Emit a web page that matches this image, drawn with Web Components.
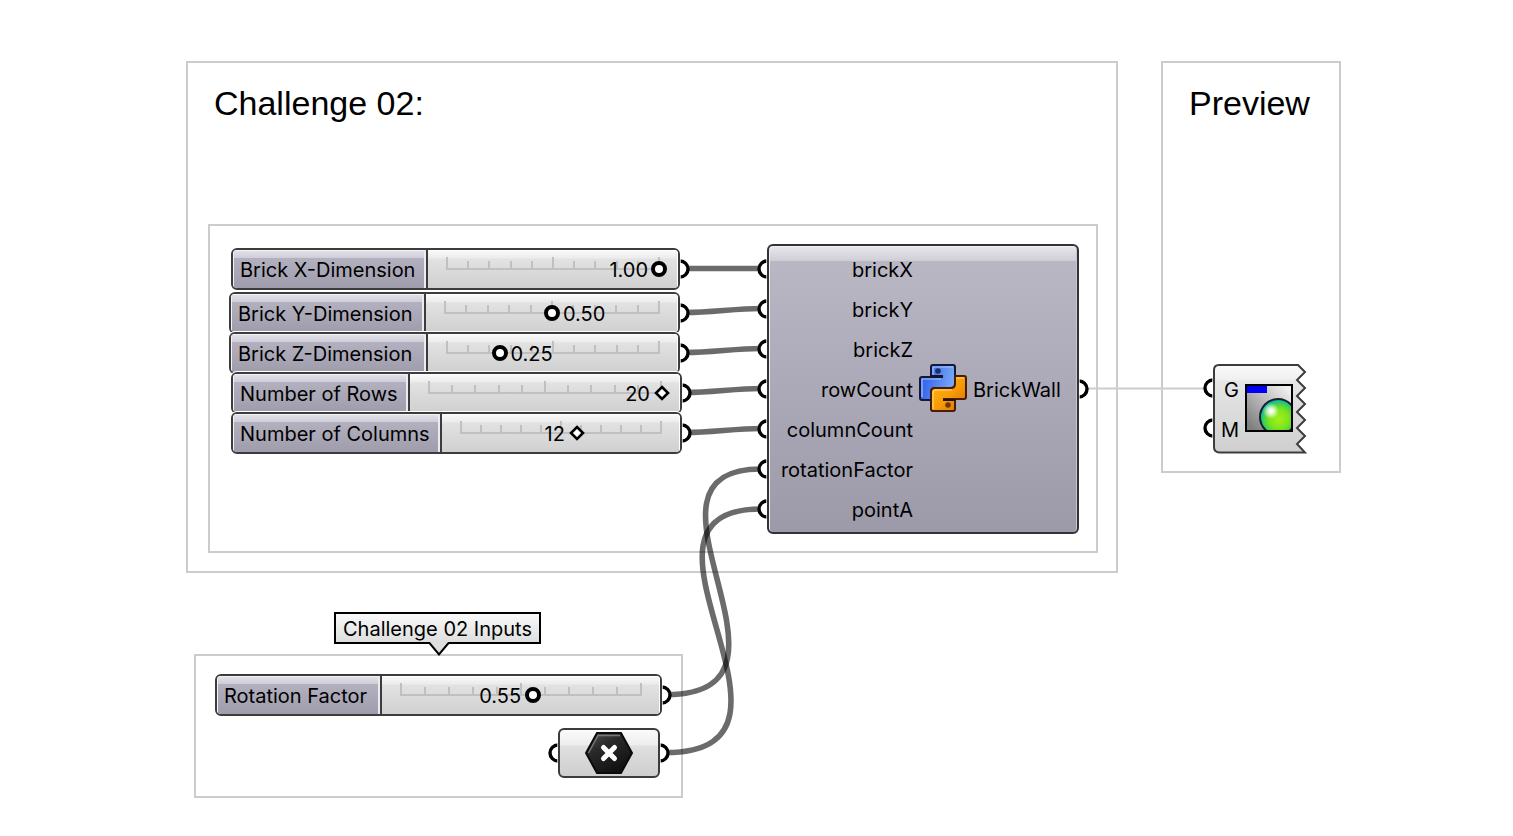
<!DOCTYPE html>
<html lang="en">
<head>
<meta charset="utf-8">
<title>Challenge 02 – Brick wall definition</title>
<style>
  body { margin: 0; background: #fff; color: #000; font-family: Inter, "Liberation Sans", sans-serif; font-size: 20px; line-height: 24px; }
</style>
</head>
<body>
<gh-canvas>
  <gh-group x="186" y="61" w="932" h="512" label="Challenge 02:"></gh-group>
  <gh-group x="208" y="224" w="890" h="329"></gh-group>
  <gh-group x="1161" y="61" w="180" h="412" label="Preview"></gh-group>
  <gh-group x="194" y="654" w="489" h="144"></gh-group>

  <gh-wires></gh-wires>

  <gh-slider x="231" y="248" w="449" name-width="195" label="Brick X-Dimension" min="0" max="1" step="0.01" value="1.00" side="left"></gh-slider>
  <gh-slider x="229" y="292" w="451" name-width="195" label="Brick Y-Dimension" min="0" max="1" step="0.01" value="0.50" side="right"></gh-slider>
  <gh-slider x="229" y="332" w="451" name-width="197" label="Brick Z-Dimension" min="0" max="1" step="0.01" value="0.25" side="right"></gh-slider>
  <gh-slider x="231" y="372" w="451" name-width="177" label="Number of Rows" min="1" max="20" step="1" value="20" side="left" knob="diamond"></gh-slider>
  <gh-slider x="231" y="412" w="451" name-width="209" label="Number of Columns" min="1" max="20" step="1" value="12" side="left" knob="diamond"></gh-slider>
  <gh-slider x="215" y="674" w="447" name-width="165" label="Rotation Factor" min="0" max="1" step="0.01" value="0.55" side="left"></gh-slider>

  <gh-script x="767" y="244" w="312" inputs="brickX brickY brickZ rowCount columnCount rotationFactor pointA" output="BrickWall"></gh-script>
  <gh-preview x="1213" y="364" w="94"></gh-preview>
  <gh-point x="558" y="728" w="102"></gh-point>
  <gh-tag x="334" y="612" w="207">Challenge 02 Inputs</gh-tag>
</gh-canvas>

<script>
const placed = `
  :host { display: block; position: absolute; box-sizing: border-box; }
  * { box-sizing: border-box; }
`;

class GhElement extends HTMLElement {
  connectedCallback() {
    if (this.shadowRoot) return;
    this.attachShadow({ mode: "open" }).innerHTML = `<style>${placed}</style>` + this.render();
    for (const [attr, prop] of [["x", "left"], ["y", "top"], ["w", "width"], ["h", "height"]]) {
      if (this.hasAttribute(attr)) this.style[prop] = this.getAttribute(attr) + "px";
    }
    this.ready();
  }
  ready() {}
}

customElements.define("gh-canvas", class extends HTMLElement {
  constructor() {
    super();
    this.attachShadow({ mode: "open" }).innerHTML = `
      <style>:host { display: block; position: relative; width: 100%; min-height: 100vh; overflow: hidden; background: #fff; }</style>
      <slot></slot>`;
  }
});

customElements.define("gh-group", class extends GhElement {
  render() {
    const label = this.getAttribute("label");
    return `
      <style>
        :host { border: 2px solid #ccc; }
        h2 { margin: 0; padding: 20px 26px; font: 400 34px/40px "Liberation Sans", Arial, sans-serif; white-space: nowrap; }
      </style>
      ${label ? `<h2>${label}</h2>` : ""}`;
  }
});

/* Half-round grip on the edge of a component */
customElements.define("gh-port", class extends HTMLElement {
  connectedCallback() {
    if (this.shadowRoot) return;
    const left = this.getAttribute("side") === "left";
    this.attachShadow({ mode: "open" }).innerHTML = `
      <style>
        :host { display: block; position: absolute; width: 10px; height: 20px; ${left ? "left: -10px" : "right: -10px"}; }
        svg { display: block; }
      </style>
      <svg width="10" height="20" viewBox="0 0 10 20" aria-hidden="true">
        <path d="${left ? "M10 2A8 8 0 0 0 10 18" : "M0 2A8 8 0 0 1 0 18"}" fill="#fff" stroke="#000" stroke-width="3.4"/>
        <path d="${left ? "M9.5 0V20" : "M.5 0V20"}" stroke="#fff" stroke-opacity=".7"/>
      </svg>`;
  }
});

customElements.define("gh-wires", class extends GhElement {
  render() {
    const wire = (x1, y1, x2, y2, d1, d2) => `<path d="M${x1} ${y1}C${x1 + d1} ${y1} ${x2 - d2} ${y2} ${x2} ${y2}"/>`;
    return `
      <style>
        :host { inset: 0; }
        svg { display: block; width: 100%; height: 100%; }
        path { fill: none; stroke: #000; stroke-opacity: .58; stroke-width: 5.6; }
        .thin { stroke: #ccc; stroke-opacity: 1; stroke-width: 2; }
      </style>
      <svg aria-hidden="true">
        ${wire(686, 268.5, 761, 268.5, 25, 25)}
        ${wire(686, 312.5, 761, 308.5, 25, 25)}
        ${wire(686, 352.5, 761, 348.5, 25, 25)}
        ${wire(686, 392.5, 761, 388.5, 25, 25)}
        ${wire(686, 432.5, 761, 428.5, 25, 25)}
        ${wire(667, 694.5, 761, 469, 157, 147)}
        ${wire(666, 752.5, 761, 509, 169, 159)}
        <path class="thin" d="M1084 388.5H1208"/>
      </svg>`;
  }
});

customElements.define("gh-slider", class extends GhElement {
  render() {
    const a = n => this.getAttribute(n);
    const diamond = a("knob") === "diamond";
    const ticks = Array.from({ length: 11 }, (_, i) => `<i${i % 5 ? "" : ' class="tall"'}></i>`).join("");
    return `
      <style>
        :host { height: 42px; }
        .box { display: flex; height: 100%; border: 2px solid #3c3c3c; border-radius: 6px; box-shadow: 0 0 0 1px #fff; overflow: hidden; background: #dcdcdc; }
        label { flex: none; width: ${a("name-width")}px; padding: 8px 0 0 7px; white-space: nowrap; border: solid #3c3c3c; border-width: 0 2px 0 0;
          background: linear-gradient(#e4e3ea, #cfced8 8px, #b3b1bf 8px, #9f9dac);
          box-shadow: inset -2px 0 #ecebf0, inset 1px 1px #f4f4f7; }
        .rail { flex: 1; display: grid; padding: 0 18px; background: linear-gradient(#fafafa, #ececec 8px, #e2e2e2 9px, #d0d0d0); box-shadow: inset -1px 1px #fff; }
        .rail > * { grid-area: 1 / 1; }
        .ticks { display: flex; justify-content: space-between; align-items: flex-end; height: 13px; margin-top: 7px; border-bottom: 2px solid #c0c0c0; }
        i { width: 2px; height: 7px; background: #c0c0c0; }
        .tall { height: 11px; }
        input { -webkit-appearance: none; appearance: none; width: calc(100% + 14px); height: 16px; margin: 11px -7px 0; background: none; outline: none; z-index: 1; }
        input::-webkit-slider-thumb { -webkit-appearance: none; width: 16px; height: 16px; border: 4px solid #000; border-radius: 50%; background: #fff; }
        input.hidden { opacity: 0; }
        .knob { width: 16px; height: 16px; margin: 11px 0 0 calc(var(--at) - 8px); z-index: 2; pointer-events: none; }
        output { margin-top: 8px; white-space: nowrap; }
        .left { justify-self: end; margin-right: calc(100% - var(--at) + 12px); }
        .right { justify-self: start; margin-left: calc(var(--at) + 11px); }
      </style>
      <div class="box">
        <label for="v">${a("label")}</label>
        <div class="rail">
          <div class="ticks">${ticks}</div>
          <input id="v" class="${diamond ? "hidden" : ""}" type="range" min="${a("min")}" max="${a("max")}" step="${a("step")}" value="${a("value")}">
          ${diamond ? `<svg class="knob" viewBox="0 0 16 16" aria-hidden="true"><path d="M8 2L14 8L8 14L2 8Z" fill="#fff" stroke="#000" stroke-width="2.6"/></svg>` : ""}
          <output for="v" class="${a("side")}">${a("value")}</output>
        </div>
      </div>
      <gh-port side="right" style="top: 11px"></gh-port>`;
  }
  ready() {
    const input = this.shadowRoot.querySelector("input");
    const output = this.shadowRoot.querySelector("output");
    const decimals = this.getAttribute("step") === "1" ? 0 : 2;
    const update = () => {
      this.style.setProperty("--at", (input.value - input.min) / (input.max - input.min) * 100 + "%");
      output.textContent = Number(input.value).toFixed(decimals);
    };
    input.addEventListener("input", update);
    update();
  }
});

customElements.define("gh-script", class extends GhElement {
  render() {
    const rows = this.getAttribute("inputs").split(" ").map(n => `<li><gh-port side="left"></gh-port>${n}</li>`).join("");
    const snake = "M12 12V3Q12 1 14 1H34Q36 1 36 3V20Q36 24 32 24H16Q12 24 12 28V36H3Q1 36 1 34V15Q1 13 3 13H24";
    return `
      <style>
        .box { display: flex; align-items: center; height: 290px; border: 2px solid #333; border-radius: 6px;
          background: linear-gradient(#e8e7ec, #cfced6 15px, #b9b7c4 15px, #9c9aa9); box-shadow: inset 1px 1px #f0f0f4, inset -1px 0 #c8c7d0; }
        ul { list-style: none; margin: 0; padding: 2px 0 0; width: 144px; text-align: right; }
        li { position: relative; height: 40px; padding-top: 8px; margin-left: -2px; }
        gh-port { top: 9px; }
        svg.py { flex: none; margin: 0 6px 2px; }
        span { padding-top: 2px; }
      </style>
      <div class="box">
        <ul>${rows}</ul>
        <svg class="py" width="48" height="48" viewBox="0 0 48 48" role="img" aria-label="Python">
          <defs>
            <linearGradient id="b" x1="0" y1=".3" x2="1" y2=".5"><stop offset="0" stop-color="#2c5be8"/><stop offset="1" stop-color="#7cacf8"/></linearGradient>
            <linearGradient id="o" x1="0" y1="0" x2="1" y2="1"><stop offset="0" stop-color="#d86c00"/><stop offset=".45" stop-color="#f79a08"/><stop offset="1" stop-color="#ffc01c"/></linearGradient>
          </defs>
          <path d="${snake}" fill="url(#b)" stroke="#10183c" stroke-width="2" stroke-linejoin="round"/>
          <path d="M14 11V3H34M3 33V15H22" fill="none" stroke="#a9c4ff" stroke-width="1.2"/>
          <g transform="rotate(180 24 24)"><path d="${snake}" fill="url(#o)" stroke="#4a1c06" stroke-width="2" stroke-linejoin="round"/></g>
          <path d="M14 45V29Q14 26 17 26H33M37 14H45" fill="none" stroke="#ffd66a" stroke-width="1.2"/>
          <path d="M12 12H24M24 36H36" stroke="#1c1420" stroke-width="2"/>
          <circle cx="19" cy="7" r="2.8" fill="#16306c"/><circle cx="29" cy="41" r="2.8" fill="#6c3a04"/>
        </svg>
        <span>${this.getAttribute("output")}</span>
      </div>
      <gh-port side="right" style="top: 135px"></gh-port>`;
  }
});

customElements.define("gh-preview", class extends GhElement {
  render() {
    return `
      <style>
        :host { height: 90px; }
        .shape { position: absolute; inset: 0; }
        .row { position: relative; display: flex; align-items: center; height: 100%; padding-bottom: 2px; gap: 6px; }
        ul { list-style: none; margin: 0; padding: 4px 0 0; width: 26px; text-align: right; }
        li { position: relative; height: 40px; padding-top: 8px; }
        gh-port { top: 8px; }
      </style>
      <svg class="shape" width="94" height="90" viewBox="0 0 94 90" aria-hidden="true">
        <defs><linearGradient id="g" x2="0" y2="1"><stop offset="0" stop-color="#fafafa"/><stop offset=".17" stop-color="#f0f0f0"/><stop offset=".18" stop-color="#e6e6e6"/><stop offset="1" stop-color="#cfcfcf"/></linearGradient></defs>
        <path d="M6 1H85L92 8L84 16L92 24L84 32L92 40L84 48L92 56L84 64L92 72L84 80L92 88.500H6Q1 88 1 83V6Q1 1 6 1Z" fill="url(#g)" stroke="#3c3c3c" stroke-width="2"/>
      </svg>
      <div class="row">
        <ul><li><gh-port side="left"></gh-port>G</li><li><gh-port side="left"></gh-port>M</li></ul>
        <svg width="48" height="48" viewBox="0 0 48 48" role="img" aria-label="Custom preview">
          <defs>
            <linearGradient id="w" x1=".1" y1=".9" x2=".9" y2=".1"><stop offset="0" stop-color="#808080"/><stop offset="1" stop-color="#eee"/></linearGradient>
            <radialGradient id="s" cx="34" cy="35" fx="34" fy="35" r="20" gradientUnits="userSpaceOnUse"><stop offset="0" stop-color="#a4f01c"/><stop offset=".5" stop-color="#7ce41c"/><stop offset=".78" stop-color="#3cd050"/><stop offset=".92" stop-color="#10b8a8"/><stop offset="1" stop-color="#1880b8"/></radialGradient>
            <radialGradient id="k"><stop offset="0" stop-color="#fff"/><stop offset=".3" stop-color="#fff" stop-opacity=".85"/><stop offset="1" stop-color="#fff" stop-opacity="0"/></radialGradient>
            <clipPath id="c"><path d="M1 1H47V47H1Z"/></clipPath>
          </defs>
          <path d="M1 1H47V47H1Z" fill="url(#w)"/>
          <circle cx="33" cy="33" r="18" fill="url(#s)" stroke="#18202c" stroke-width="2" clip-path="url(#c)"/>
          <circle cx="26" cy="27" r="8" fill="url(#k)"/>
          <path d="M2 2H22V9H2Z" fill="#0000f4"/>
          <path d="M1 1H47V47H1Z" fill="none" stroke="#000" stroke-width="2"/>
        </svg>
      </div>`;
  }
});

customElements.define("gh-point", class extends GhElement {
  render() {
    return `
      <style>
        .box { display: flex; justify-content: center; align-items: center; height: 50px; border: 2px solid #3c3c3c; border-radius: 6px;
          background: linear-gradient(#fbfbfb, #ededed 15px, #e0e0e0 16px, #cecece); }
        gh-port { top: 15px; }
      </style>
      <gh-port side="left"></gh-port>
      <div class="box">
        <svg width="48" height="42" viewBox="0 0 48 42" role="img" aria-label="Point">
          <defs><linearGradient id="h" x2=".6" y2="1"><stop offset="0" stop-color="#555"/><stop offset=".4" stop-color="#2a2a2a"/><stop offset="1" stop-color="#111"/></linearGradient></defs>
          <path d="M12 1H36L47 21L36 41H12L1 21Z" fill="url(#h)" stroke="#0a0a0a" stroke-width="2"/>
          <path d="M3.500 21L13 3.500H35" fill="none" stroke="#777" stroke-width="1.4"/>
          <path d="M18.500 15.500L29.500 26.500M29.500 15.500L18.500 26.500" stroke="#fff" stroke-width="5" stroke-linecap="round"/>
        </svg>
      </div>
      <gh-port side="right"></gh-port>`;
  }
});

customElements.define("gh-tag", class extends GhElement {
  render() {
    return `
      <style>
        .box { height: 32px; padding: 3px 0; border: 2px solid #000; text-align: center; white-space: nowrap; background: linear-gradient(#fafafa, #dedede); }
        svg { display: block; position: absolute; left: 94px; top: 30px; }
      </style>
      <div class="box"><slot></slot></div>
      <svg width="22" height="15" viewBox="0 0 22 15" aria-hidden="true"><path d="M0 1H1.500L11 12.500L20.500 1H22V0H0Z" fill="#dedede"/><path d="M0 1H1.500L11 12.500L20.500 1H22" fill="none" stroke="#000" stroke-width="2"/></svg>`;
  }
});
</script>
</body>
</html>
